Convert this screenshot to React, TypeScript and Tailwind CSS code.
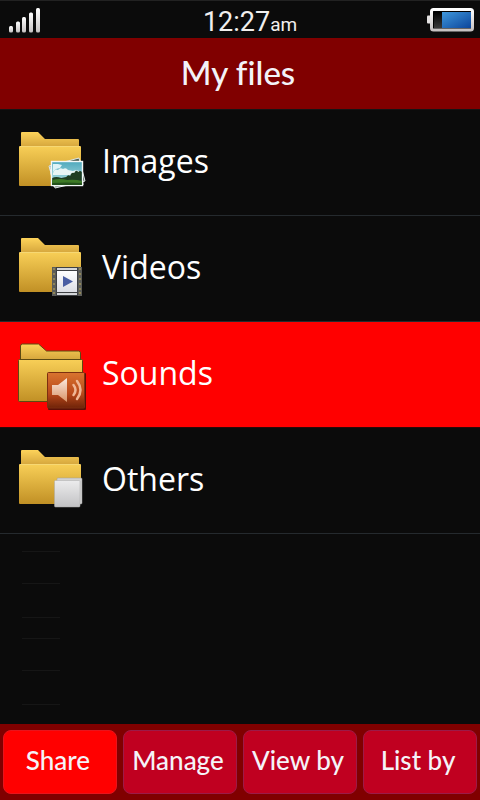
import React, { useState } from 'react';
import clsx from 'clsx';

type Kind = 'images' | 'videos' | 'sounds' | 'others';

const FOLDERS: { kind: Kind; label: string }[] = [
  { kind: 'images', label: 'Images' },
  { kind: 'videos', label: 'Videos' },
  { kind: 'sounds', label: 'Sounds' },
  { kind: 'others', label: 'Others' },
];

const ACTIONS = ['Share', 'Manage', 'View by', 'List by'];

const ImagesBadge = () => (
  <g>
    <path d="M33 39 L63 31 L69 54 L39 61 Z" fill="#4a5a50" stroke="#dfe8e8" strokeWidth="1" />
    <path d="M34 40 L65 34 L67 58 L37 59 Z" fill="#3b6d78" stroke="#eef3f3" strokeWidth="1" />
    <rect x="35.5" y="34.5" width="31" height="24" fill="url(#sky)" stroke="#f4f8f8" strokeWidth="1.4" />
    <path d="M37 37 h5 l4 1 -2 3 -4 1 -3 3 Z" fill="#dff3f6" />
    <path d="M37 46 q2 -5 5 -3 q2 -3 5 -1 q3 -2 5 1 l5 1 q4 -2 8 1 v3 h-28 Z" fill="#e8f5f5" />
    <path d="M36.2 51 q4 -2 9 0 l5 -1 q2 -3 4 -1 q1 -4 4 -3 q2 -4 4 -1 q2 -2 3.6 0 v13 h-29.6 Z" fill="#1f3d22" />
    <path d="M36.2 53 q8 -2 15 0 q8 -1 14.6 1 v4 h-29.6 Z" fill="#3d7a26" />
    <path d="M36.2 56 q14 -1 29.6 0 v2 h-29.6 Z" fill="#23511b" />
  </g>
);

const VideosBadge = () => (
  <g>
    <rect x="36" y="34" width="30" height="29" fill="#5c5d59" />
    <rect x="40" y="34" width="22" height="29" fill="#3e4043" />
    <rect x="41" y="35" width="20" height="2" fill="#d4d6d9" />
    <rect x="41" y="38" width="20" height="21" fill="url(#film)" />
    <rect x="41" y="60" width="20" height="2" fill="#d4d6d9" />
    <path d="M47 43 L57 48.5 L47 54 Z" fill="#4a5ea3" />
    {[35, 40, 45, 50, 55, 59].map(y => (
      <g key={y} fill="#8f8558">
        <rect x="37" y={y} width="2" height="2" />
        <rect x="63" y={y} width="2" height="2" />
      </g>
    ))}
  </g>
);

const SoundsBadge = () => (
  <g>
    <rect x="32" y="34" width="38" height="37" rx="1" fill="#5b1006" />
    <rect x="31.5" y="33.5" width="37" height="35.5" rx="1" fill="url(#rust)" stroke="#7c2f10" strokeWidth="1" />
    <path d="M36 46 h6 l9 -7 v24 l-9 -7 h-6 Z" fill="url(#horn)" />
    <path d="M57.5 46 q4 5 0 10" fill="none" stroke="#f0b795" strokeWidth="2.5" strokeLinecap="round" />
    <path d="M61 42 q7 9 0 18" fill="none" stroke="#f0b795" strokeWidth="2.5" strokeLinecap="round" />
  </g>
);

const OthersBadge = () => (
  <g>
    <rect x="41" y="33" width="25" height="26" rx="1" fill="#d2d2d2" stroke="#9d9d9d" strokeWidth="0.5" />
    <rect x="38.5" y="35.5" width="25.5" height="26.5" rx="1" fill="url(#paper)" stroke="#a8a8a8" strokeWidth="0.5" />
  </g>
);

const FolderIcon = ({ kind }: { kind: Kind }) => (
  <svg viewBox="0 0 72 72" className="size-[72px] shrink-0" aria-hidden="true">
    {kind === 'sounds' ? (
      <g stroke="#5c4a12" strokeWidth="1">
        <path d="M4.5 21 V7 q0 -2 2 -2 h16 l8 7 h32 q2 0 2 2 V23 Z" fill="url(#tab)" />
        <rect x="2.5" y="20.5" width="64" height="42" rx="1" fill="url(#front)" />
      </g>
    ) : (
      <g>
        <path d="M5 22 V6 q0 -1 1 -1 h16 l7 7 h33 q1 0 1 1 V22 Z" fill="url(#tab)" />
        <rect x="3" y="19" width="62" height="40" rx="1" fill="url(#front)" />
        <path d="M4 19.5 H64" stroke="#f7d873" strokeWidth="1" />
      </g>
    )}
    {kind === 'images' && <ImagesBadge />}
    {kind === 'videos' && <VideosBadge />}
    {kind === 'sounds' && <SoundsBadge />}
    {kind === 'others' && <OthersBadge />}
  </svg>
);

// Shared gradients, referenced by id from every icon
const Gradients = () => (
  <svg className="absolute size-0" aria-hidden="true">
    <defs>
      <linearGradient id="tab" x1="0" y1="0" x2="0" y2="1">
        <stop offset="0" stopColor="#fdd35a" />
        <stop offset="1" stopColor="#cf9f38" />
      </linearGradient>
      <linearGradient id="front" x1="0" y1="0" x2="0" y2="1">
        <stop offset="0" stopColor="#f8cf57" />
        <stop offset="1" stopColor="#c19025" />
      </linearGradient>
      <linearGradient id="paper" x1="0" y1="0" x2="0" y2="1">
        <stop offset="0" stopColor="#ececed" />
        <stop offset="1" stopColor="#c2c2c4" />
      </linearGradient>
      <linearGradient id="film" x1="0" y1="0" x2="0" y2="1">
        <stop offset="0" stopColor="#ffffff" />
        <stop offset="1" stopColor="#dcdee4" />
      </linearGradient>
      <linearGradient id="sky" x1="0" y1="0" x2="0" y2="1">
        <stop offset="0" stopColor="#4fa9bd" />
        <stop offset="1" stopColor="#b9e3e6" />
      </linearGradient>
      <linearGradient id="rust" x1="0" y1="0" x2="0" y2="1">
        <stop offset="0" stopColor="#d9742f" />
        <stop offset="0.6" stopColor="#b8481a" />
        <stop offset="1" stopColor="#6f2409" />
      </linearGradient>
      <linearGradient id="horn" x1="0" y1="0" x2="0" y2="1">
        <stop offset="0" stopColor="#fbeadf" />
        <stop offset="1" stopColor="#d99468" />
      </linearGradient>
      <linearGradient id="metal" x1="0" y1="0" x2="0" y2="1">
        <stop offset="0" stopColor="#ffffff" />
        <stop offset="1" stopColor="#c6c2c2" />
      </linearGradient>
      <linearGradient id="charge" x1="0" y1="0" x2="1" y2="1">
        <stop offset="0" stopColor="#3f97dc" />
        <stop offset="1" stopColor="#0b459b" />
      </linearGradient>
      <linearGradient id="empty" x1="0" y1="0" x2="0" y2="1">
        <stop offset="0" stopColor="#000000" />
        <stop offset="1" stopColor="#3a3a3a" />
      </linearGradient>
    </defs>
  </svg>
);

const StatusBar = () => (
  <div className="flex h-[38px] items-center justify-between border-t border-[#222222] pl-2 pr-1">
    <svg viewBox="0 0 50 26" className="h-[26px] w-[50px]" aria-label="Signal strength">
      <rect x="1" y="19" width="4" height="6.5" rx="1.5" fill="url(#metal)" />
      <rect x="8" y="14.5" width="4" height="11" rx="1.5" fill="url(#metal)" />
      <rect x="14" y="10" width="4" height="15.5" rx="1.5" fill="url(#metal)" />
      <rect x="21" y="5.5" width="4" height="20" rx="1.5" fill="url(#metal)" />
      <rect x="28" y="1" width="4" height="24.5" rx="1.5" fill="url(#metal)" />
    </svg>
    <div className="flex items-baseline pl-4 pt-2 font-['Roboto',sans-serif] text-[27px] leading-8 text-[#f1efee]">
      12:27<span className="text-[19px]">am</span>
    </div>
    <svg viewBox="0 0 50 26" className="h-[26px] w-[50px]" aria-label="Battery">
      <rect x="1" y="8.5" width="5" height="8" rx="1" fill="#e4e2e2" />
      <rect x="5.5" y="2.5" width="41" height="20.5" rx="2" fill="#000000" stroke="url(#metal)" strokeWidth="3" />
      <rect x="8" y="5" width="8" height="16" fill="url(#empty)" />
      <rect x="16" y="5" width="29" height="16" fill="url(#charge)" />
    </svg>
  </div>
);

const App: React.FC = () => {
  const [selected, setSelected] = useState<Kind>('sounds');
  const [action, setAction] = useState('Share');

  return (
    <div className="flex min-h-screen flex-col bg-[#0b0b0b] text-white">
      <Gradients />
      <StatusBar />

      <header className="flex h-[72px] items-center justify-center border-b border-[#151515] bg-[#800000] pb-1 pr-1">
        <h1 className="font-['Lato',sans-serif] text-[33px] font-medium leading-10 text-[#f3f3f8] [font-variant-ligatures:none]">My files</h1>
      </header>

      {/* Folder list */}
      <main className="flex-1">
        <ul>
          {FOLDERS.map(f => (
            <li key={f.kind}>
              <button
                type="button"
                onClick={() => setSelected(f.kind)}
                className={clsx(
                  "flex h-[106px] w-full items-center gap-[14px] border-b pl-4 text-left font-['Open_Sans',sans-serif] text-[32px]",
                  selected === f.kind ? 'border-[#2a0808] bg-[#ff0000]' : 'border-[#252a2e]'
                )}
              >
                <FolderIcon kind={f.kind} />
                <span className="pb-1">{f.label}</span>
              </button>
            </li>
          ))}
        </ul>

        {/* Empty slots */}
        <div className="flex w-[60px] flex-col pl-[22px]">
          <div className="mt-[17px] h-px bg-[#161616]" />
          <div className="mt-[31px] h-px bg-[#161616]" />
          <div className="mt-[33px] h-px bg-[#161616]" />
          <div className="mt-[20px] h-px bg-[#161616]" />
          <div className="mt-[31px] h-px bg-[#161616]" />
          <div className="mt-[33px] h-px bg-[#161616]" />
        </div>
      </main>

      <footer className="grid grid-cols-4 gap-[6px] bg-[#800000] px-[3px] py-[6px]">
        {ACTIONS.map(a => (
          <button
            key={a}
            type="button"
            onClick={() => setAction(a)}
            className={clsx(
              "h-16 rounded-lg border pb-1 pr-1 font-['Lato',sans-serif] text-[26px] font-medium text-[#f5f3f8]",
              action === a ? 'border-[#e8141c] bg-[#ff0000]' : 'border-[#9c1a48] bg-[#c00020]'
            )}
          >
            {a}
          </button>
        ))}
      </footer>
    </div>
  );
};

export default App;
